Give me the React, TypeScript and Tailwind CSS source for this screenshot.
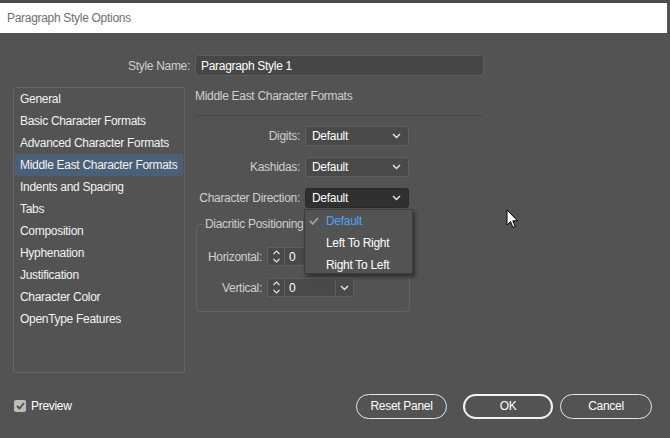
import React from 'react';

const sections = [
  'General',
  'Basic Character Formats',
  'Advanced Character Formats',
  'Middle East Character Formats',
  'Indents and Spacing',
  'Tabs',
  'Composition',
  'Hyphenation',
  'Justification',
  'Character Color',
  'OpenType Features',
];

function Chevron({ className = '' }: { className?: string }) {
  return (
    <svg width="9" height="6" viewBox="0 0 9 6" className={className}>
      <polyline points="1,1 4.5,4.5 8,1" fill="none" stroke="#e8e8e8" strokeWidth="1.4" />
    </svg>
  );
}

function Select({ value, active }: { value: string; active?: boolean }) {
  return (
    <div
      className={
        'flex h-[20px] w-[104px] items-center justify-between rounded-[3px] border pl-[6px] pr-[7px] ' +
        (active ? 'border-[#2b2b2b] bg-[#303030]' : 'border-[#5f5f5f] bg-[#494949]')
      }
    >
      <span className="text-white">{value}</span>
      <Chevron />
    </div>
  );
}

function SpinBox({ value }: { value: string }) {
  return (
    <div className="flex h-[19px] rounded-[2px] border border-[#5f5f5f] bg-[#494949]">
      <div className="flex w-[17px] items-center justify-center border-r border-[#5f5f5f]">
        <svg width="9" height="15" viewBox="0 0 9 15">
          <polyline points="1.5,5 4.5,2 7.5,5" fill="none" stroke="#e0e0e0" strokeWidth="1.2" />
          <polyline points="1.5,10 4.5,13 7.5,10" fill="none" stroke="#e0e0e0" strokeWidth="1.2" />
        </svg>
      </div>
      <div className="flex w-[50px] items-center pl-[4px] text-white">{value}</div>
      <div className="flex w-[18px] items-center justify-center border-l border-[#5f5f5f]">
        <Chevron />
      </div>
    </div>
  );
}

function Label({ children, width }: { children: React.ReactNode; width: string }) {
  return (
    <div className={'flex justify-end whitespace-nowrap pr-[5px] text-[#cfcfcf] ' + width}>{children}</div>
  );
}

export default function App() {
  return (
    <div
      className="relative h-[438px] w-[670px] overflow-hidden whitespace-nowrap bg-[#535353] text-[12px] tracking-[-0.3px]"
      style={{ fontFamily: '"Liberation Sans", Arial, sans-serif' }}
    >
      {/* window chrome */}
      <div className="h-[3px] bg-[#4b4b4b]" />
      <div className="mr-[3px] flex h-[30px] items-center bg-white pl-[7px] text-[#707070]">
        Paragraph Style Options
      </div>

      {/* style name */}
      <div className="mt-[22px] flex items-center">
        <Label width="w-[195px]">Style Name:</Label>
        <div className="flex h-[21px] w-[289px] items-center rounded-[3px] border border-[#5e5e5e] bg-[#464646] pl-[5px] text-white">
          Paragraph Style 1
        </div>
      </div>

      {/* main area */}
      <div className="mt-[11px] flex">
        <div className="ml-[13px] h-[286px] w-[172px] rounded-[3px] border border-[#666666] pt-[0px]">
          {sections.map((s) => (
            <div
              key={s}
              className={
                'mx-[1px] flex h-[22px] items-center pl-[5px] text-[#f2f2f2] ' +
                (s === 'Middle East Character Formats' ? 'bg-[#4a5f78]' : '')
              }
            >
              {s}
            </div>
          ))}
        </div>

        <div className="ml-[10px] flex w-[288px] flex-col">
          <div className="h-[18px] leading-[18px] text-[#cfcfcf]">Middle East Character Formats</div>
          <div className="mt-[10px] h-px bg-[#474747]" />

          <div className="mt-[10px] flex flex-col gap-[11px]">
            <div className="flex items-center">
              <Label width="w-[110px]">Digits:</Label>
              <Select value="Default" />
            </div>
            <div className="flex items-center">
              <Label width="w-[110px]">Kashidas:</Label>
              <Select value="Default" />
            </div>
            <div className="flex items-center">
              <Label width="w-[110px]">Character Direction:</Label>
              <div className="relative">
                <Select value="Default" active />
                <div className="absolute left-[-1px] top-[21px] z-10 h-[65px] w-[109px] border border-[#3c3c3c] bg-[#535353] shadow-[2px_3px_4px_rgba(0,0,0,0.45)]">
                  <div className="flex h-[22px] items-center">
                    <svg width="10" height="8" viewBox="0 0 10 8" className="ml-[4px]">
                      <polyline points="1,4 3.8,6.8 9,1" fill="none" stroke="#a0a0a0" strokeWidth="1.8" />
                    </svg>
                    <span className="ml-[7px] text-[#4da3f5]">Default</span>
                  </div>
                  <div className="flex h-[22px] items-center pl-[21px] text-white">Left To Right</div>
                  <div className="flex h-[22px] items-center pl-[21px] text-white">Right To Left</div>
                </div>
              </div>
            </div>
          </div>

          <div className="relative ml-[1px] mt-[16px] h-[88px] w-[214px] rounded-[3px] border border-[#626262] pt-[22px]">
            <div className="absolute left-[7px] top-[-8px] bg-[#535353] px-[1px] leading-[14px] text-[#cfcfcf]">
              Diacritic Positioning
            </div>
            <div className="flex flex-col gap-[12px]">
              <div className="flex items-center">
                <Label width="w-[70px]">Horizontal:</Label>
                <SpinBox value="0" />
              </div>
              <div className="flex items-center">
                <Label width="w-[70px]">Vertical:</Label>
                <SpinBox value="0" />
              </div>
            </div>
          </div>
        </div>
      </div>

      {/* footer */}
      <div className="mt-[21px] flex h-[24px] items-center">
        <div className="ml-[14px] flex items-center">
          <div className="flex h-[12px] w-[12px] items-center justify-center rounded-[2px] bg-[#bdbdbd]">
            <svg width="9" height="8" viewBox="0 0 9 8">
              <polyline points="1,4 3.5,6.5 8,1" fill="none" stroke="#4a4a4a" strokeWidth="1.8" />
            </svg>
          </div>
          <span className="ml-[5px] text-white">Preview</span>
        </div>
        <div className="ml-auto mr-[18px] flex items-center">
          <button className="flex h-[25px] w-[91px] items-center justify-center rounded-full border-[1.5px] border-[#e6e6e6] text-white">
            Reset Panel
          </button>
          <button className="ml-[16px] flex h-[25px] w-[90px] items-center justify-center rounded-full border-2 border-[#f2f2f2] text-white">
            OK
          </button>
          <button className="ml-[7px] flex h-[25px] w-[92px] items-center justify-center rounded-full border-[1.5px] border-[#e6e6e6] text-white">
            Cancel
          </button>
        </div>
      </div>

      {/* mouse pointer */}
      <svg className="absolute left-[506px] top-[209px]" width="13" height="20" viewBox="0 0 13 20">
        <path d="M1 1 L1 16 L4.5 12.5 L7 18.5 L9.2 17.6 L6.8 11.8 L11.5 11.8 Z" fill="#ffffff" stroke="#000000" strokeWidth="1" />
      </svg>
    </div>
  );
}
